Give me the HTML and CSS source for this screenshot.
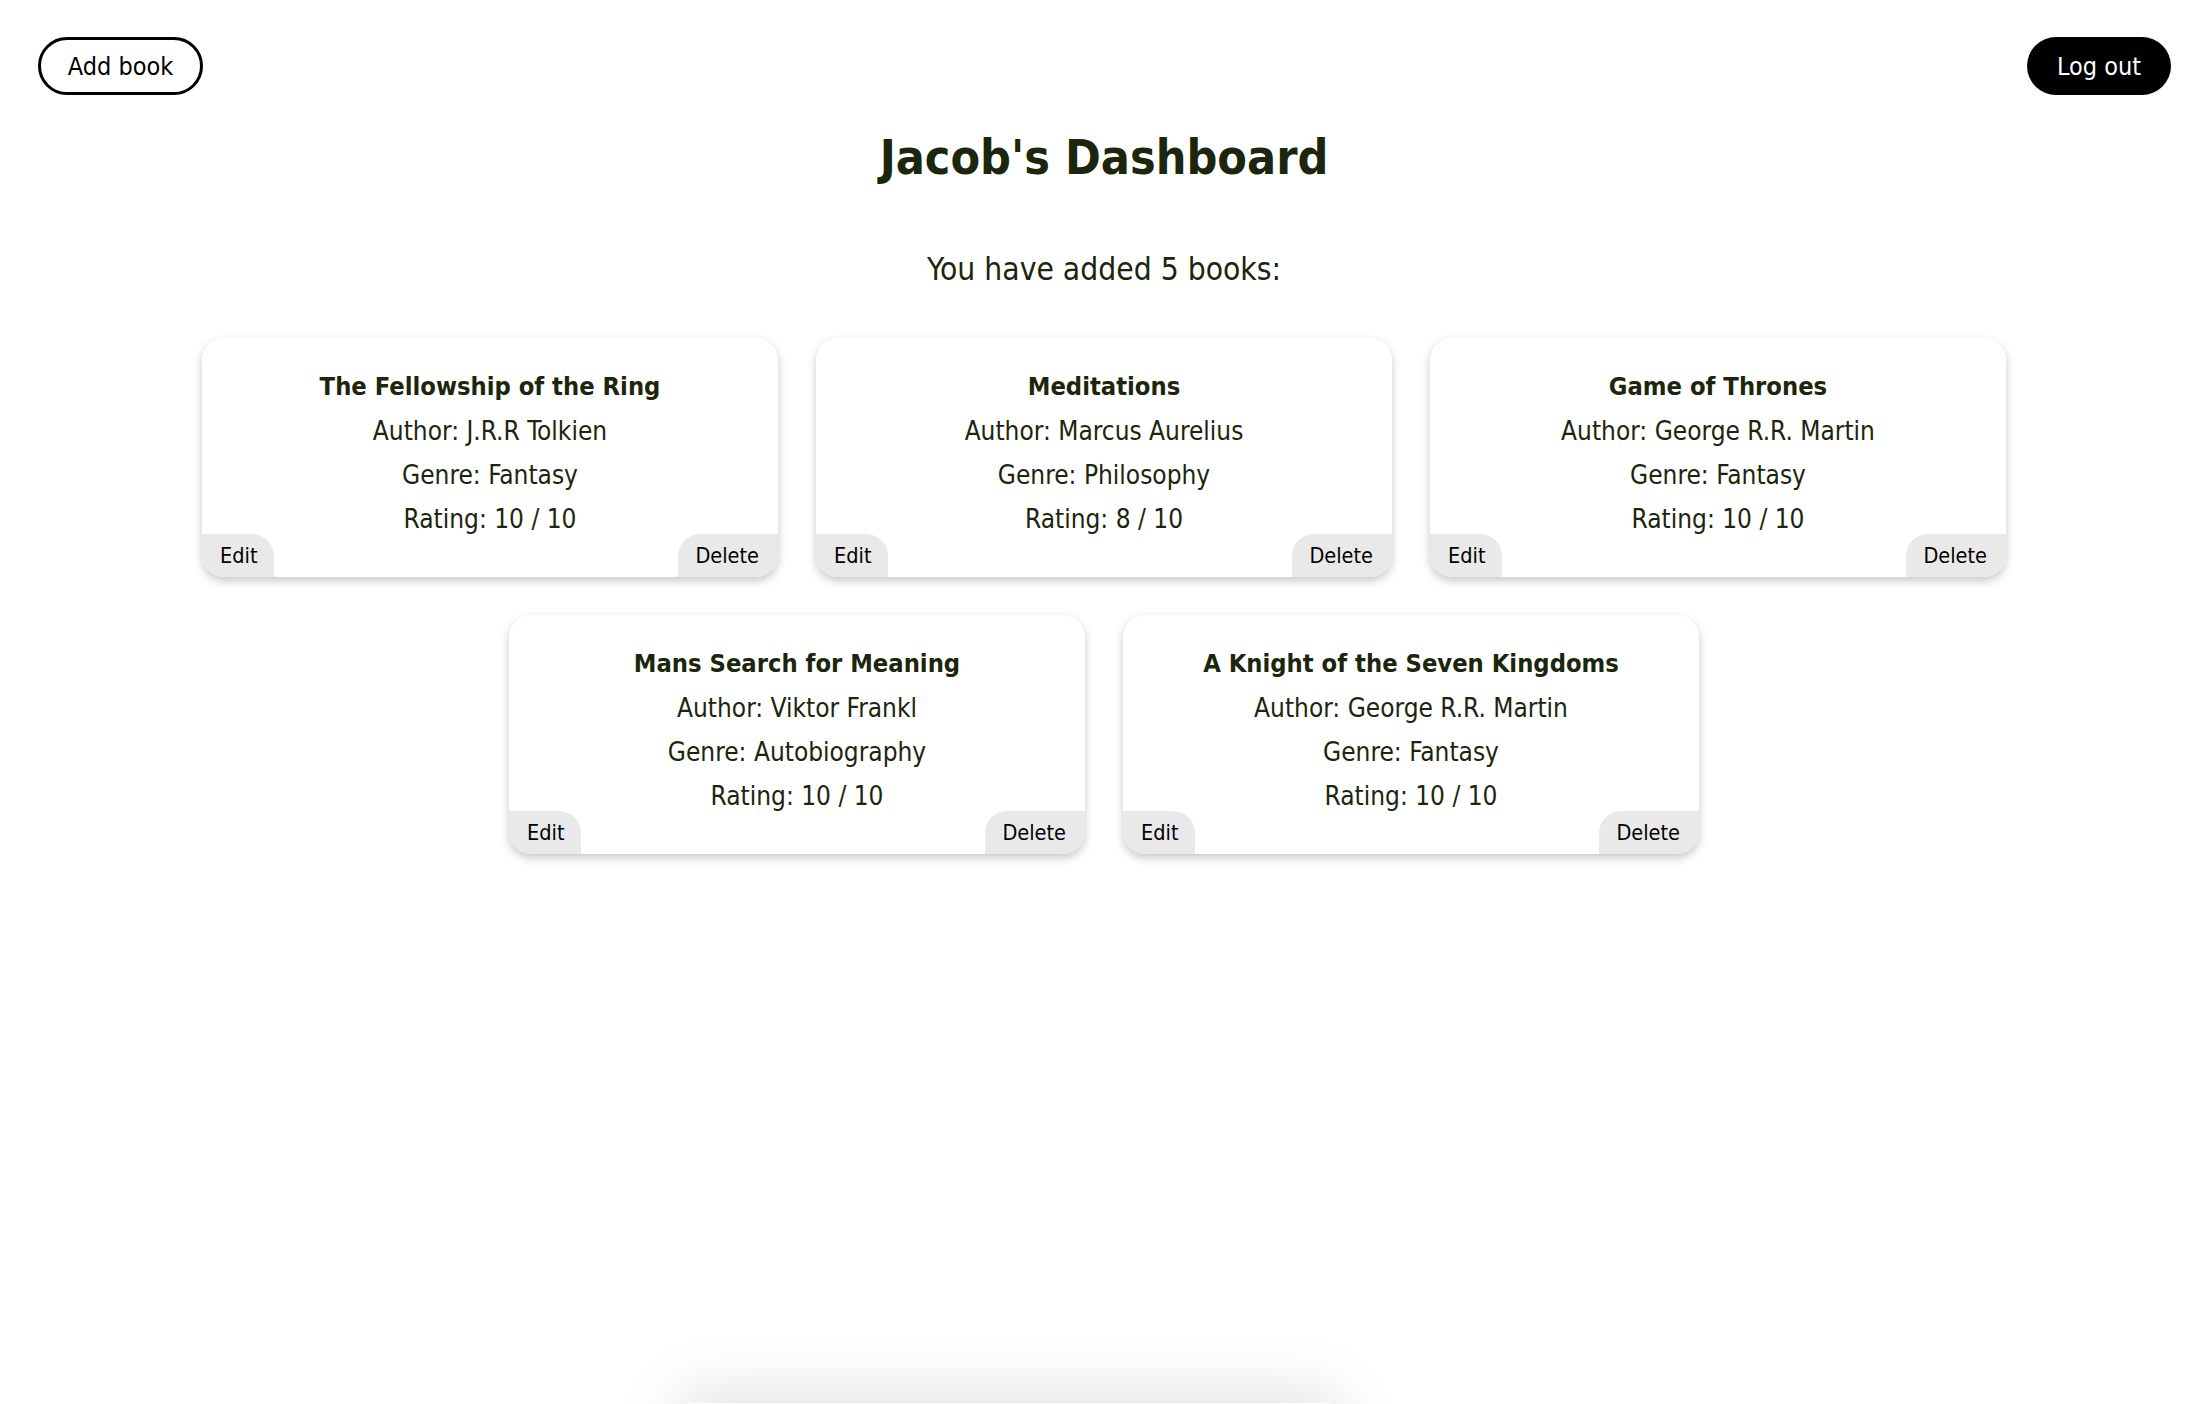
FILE: index.html
```html
<!DOCTYPE html>
<html lang="en">
<head>
<meta charset="utf-8">
<title>Jacob's Dashboard</title>
<link rel="stylesheet" href="styles.css">
</head>
<body>
<header class="topbar">
  <button class="btn btn-outline">Add book</button>
  <button class="btn btn-solid">Log out</button>
</header>
<main class="dashboard">
  <h1 class="title">Jacob's Dashboard</h1>
  <p class="subtitle">You have added 5 books:</p>
  <section class="cards">
    <article class="card">
      <div class="card-body">
        <div class="card-title">The Fellowship of the Ring</div>
        <div class="card-line">Author: J.R.R Tolkien</div>
        <div class="card-line">Genre: Fantasy</div>
        <div class="card-line">Rating: 10 / 10</div>
      </div>
      <div class="card-actions"><button class="act act-edit">Edit</button><button class="act act-delete">Delete</button></div>
    </article>
    <article class="card">
      <div class="card-body">
        <div class="card-title">Meditations</div>
        <div class="card-line">Author: Marcus Aurelius</div>
        <div class="card-line">Genre: Philosophy</div>
        <div class="card-line">Rating: 8 / 10</div>
      </div>
      <div class="card-actions"><button class="act act-edit">Edit</button><button class="act act-delete">Delete</button></div>
    </article>
    <article class="card">
      <div class="card-body">
        <div class="card-title">Game of Thrones</div>
        <div class="card-line">Author: George R.R. Martin</div>
        <div class="card-line">Genre: Fantasy</div>
        <div class="card-line">Rating: 10 / 10</div>
      </div>
      <div class="card-actions"><button class="act act-edit">Edit</button><button class="act act-delete">Delete</button></div>
    </article>
    <article class="card">
      <div class="card-body">
        <div class="card-title">Mans Search for Meaning</div>
        <div class="card-line">Author: Viktor Frankl</div>
        <div class="card-line">Genre: Autobiography</div>
        <div class="card-line">Rating: 10 / 10</div>
      </div>
      <div class="card-actions"><button class="act act-edit">Edit</button><button class="act act-delete">Delete</button></div>
    </article>
    <article class="card">
      <div class="card-body">
        <div class="card-title">A Knight of the Seven Kingdoms</div>
        <div class="card-line">Author: George R.R. Martin</div>
        <div class="card-line">Genre: Fantasy</div>
        <div class="card-line">Rating: 10 / 10</div>
      </div>
      <div class="card-actions"><button class="act act-edit">Edit</button><button class="act act-delete">Delete</button></div>
    </article>
  </section>
  <div class="fold-panel"></div>
</main>
</body>
</html>
```

FILE: styles.css
```css
html, body {
  margin: 0;
  padding: 0;
  background: #ffffff;
}

body {
  font-family: "DejaVu Sans Condensed", "DejaVu Sans", "Liberation Sans", sans-serif;
  color: #1b260c;
}

.topbar {
  display: flex;
  justify-content: space-between;
  align-items: center;
  padding: 37px 37px 0 38px;
}

.btn {
  font-family: inherit;
  font-size: 25px;
  height: 58px;
  border-radius: 29px;
  cursor: pointer;
  box-sizing: border-box;
}

.btn-outline {
  width: 165px;
  background: #ffffff;
  color: #000000;
  border: 3.5px solid #000000;
}

.btn-solid {
  width: 144px;
  background: #000000;
  color: #ffffff;
  border: none;
}

.dashboard {
  display: flex;
  flex-direction: column;
  align-items: center;
}

.title {
  margin: 0;
  font-size: 48px;
  font-weight: bold;
  line-height: 124px;
  color: #1b260c;
}

.subtitle {
  margin: 0;
  font-size: 31.5px;
  line-height: 100px;
  color: #1b260c;
}

.cards {
  margin-top: 19px;
  width: 1810px;
  display: flex;
  flex-wrap: wrap;
  justify-content: center;
  gap: 38px;
}

.card {
  width: 576px;
  height: 239px;
  border-radius: 22px;
  background: #ffffff;
  box-shadow: 0 4px 10px rgba(0, 0, 0, 0.22);
  overflow: hidden;
  display: flex;
  flex-direction: column;
  box-sizing: border-box;
}

.card-body {
  padding-top: 27px;
  text-align: center;
}

.card-title {
  font-size: 25.3px;
  font-weight: bold;
  line-height: 44px;
}

.card-line {
  font-size: 26px;
  line-height: 44px;
}

.card-actions {
  margin-top: -7px;
  display: flex;
  justify-content: space-between;
}

.act {
  font-family: inherit;
  font-size: 21.5px;
  color: #000000;
  background: #e9e9e9;
  border: none;
  height: 43px;
  padding: 0 17px 0 18px;
  cursor: pointer;
}

.act-edit {
  border-top-right-radius: 22px;
}

.act-delete {
  border-top-left-radius: 22px;
  padding: 0 19px 0 17px;
}

.fold-panel {
  width: 640px;
  height: 200px;
  margin-top: 549px;
  margin-right: 190px;
  background: #ffffff;
  box-shadow: 0 0 60px 10px rgba(0, 0, 0, 0.12);
}
```
